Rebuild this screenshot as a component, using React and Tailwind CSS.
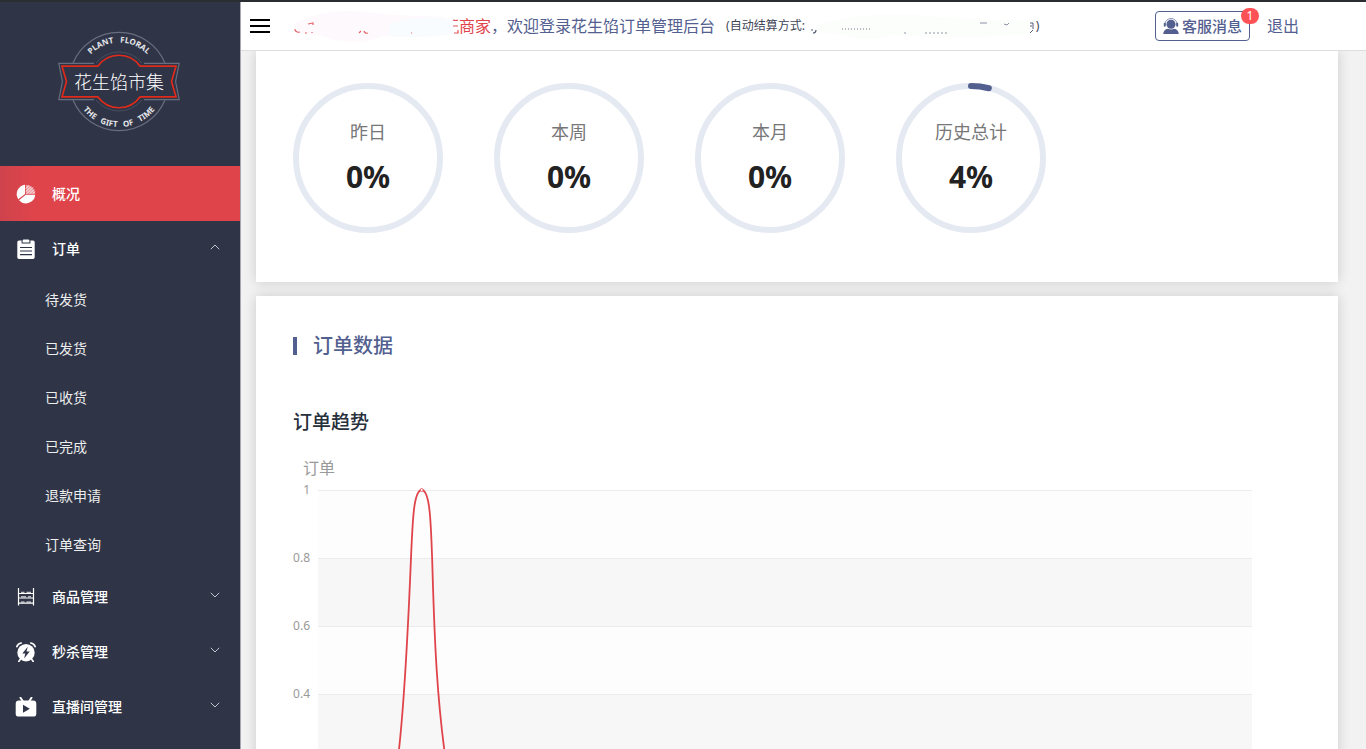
import React from "react";

const orderLinks = ["待发货", "已发货", "已收货", "已完成", "退款申请", "订单查询"];

const rates = [
  { label: "昨日", value: 0 },
  { label: "本周", value: 0 },
  { label: "本月", value: 0 },
  { label: "历史总计", value: 4 },
];

const ticks = ["1", "0.8", "0.6", "0.4"];

function Logo() {
  return (
    <svg viewBox="0 0 122 102" className="w-[122px] h-[102px]" fill="none" role="img" aria-label="花生馅市集">
      <defs>
        <path id="logo-top" d="M22 50.5a39 39 0 0 1 78 0" />
        <path id="logo-bottom" d="M15.500 50.500a45.500 45.500 0 0 0 91 0" />
      </defs>
      <path d="M15 32a49.8 49.8 0 0 1 92 0M15 69a49.8 49.8 0 0 0 92 0" stroke="#686e7e" strokeWidth="1.2" />
      <path d="M38 32a29.5 29.5 0 0 1 46 0M38 69a29.5 29.5 0 0 0 46 0" stroke="#474d60" strokeWidth="1" />
      <path d="M36 32.3H.8l3.6 18.2L.8 68.7H36M86 32.3h35.2l-3.6 18.2 3.6 18.2H86" stroke="#686e7e" strokeWidth="1.2" />
      <path
        d="M4 35.2H39.8a26 26 0 0 1 42.4 0H118l-4.5 15.3L118 65.8H82.2a26 26 0 0 1-42.4 0H4l4.5-15.3z"
        stroke="#e02a1a"
        strokeWidth="1.7"
      />
      <text fill="#e6e7ea" fontSize="8" fontWeight="700" className="font-['Noto_Sans',sans-serif]">
        <textPath href="#logo-top" startOffset="50%" textAnchor="middle">PLANT&#160;&#160; FLORAL</textPath>
      </text>
      <text fill="#e6e7ea" fontSize="8" fontWeight="700" className="font-['Noto_Sans',sans-serif]">
        <textPath href="#logo-bottom" startOffset="50%" textAnchor="middle">THE&#160;&#160; GIFT&#160;&#160; OF&#160;&#160; TIME</textPath>
      </text>
      <text x="61" y="57.5" fill="#fff" fontSize="18" fontWeight="300" textAnchor="middle">花生馅市集</text>
    </svg>
  );
}

function PieIcon() {
  return (
    <svg viewBox="0 0 20 20" className="size-5">
      <path d="M9 10V.8a9.3 9.3 0 0 0-6.7 14.5z" fill="#fff" />
      <path d="M9.8 10.8h9.4A9.3 9.3 0 0 1 3 16.2z" fill="#fff" />
      <path d="M9.8.7A9.3 9.3 0 0 1 19.2 10H9.8z" fill="#fff" fillOpacity=".45" />
      <path d="M10 4.5 12.8 1.5M10 7.5l5-5M11 9.5l6-6M14 9.5l4-4M17 9.5l1.8-1.8" stroke="#fff" strokeWidth=".9" />
    </svg>
  );
}

function ClipboardIcon() {
  return (
    <svg viewBox="0 0 20 20" className="size-5">
      <path d="M3 1.6h2.6v2.9h8.8V1.6H17a1.7 1.7 0 0 1 1.7 1.7v14.9a1.7 1.7 0 0 1-1.7 1.7H3a1.7 1.7 0 0 1-1.7-1.7V3.3A1.7 1.7 0 0 1 3 1.6z" fill="#fff" />
      <path d="M6.6 1.7q0-1.3 1.2-1.3h4.4q1.2 0 1.2 1.3v1.8H6.6z" fill="#fff" />
      <path d="M4 8.5h12M4 12h12M4 15.7h12" stroke="#2f3447" strokeWidth="1.2" />
    </svg>
  );
}

function ShelfIcon() {
  return (
    <svg viewBox="0 0 20 20" className="size-5" stroke="#fff" fill="none">
      <path d="M2.500 1v17.500M17.500 1v17.500" strokeWidth="1.2" />
      <path d="M2.500 6.500h15M2.500 11h15M2.500 16.200h15" strokeWidth="1.2" />
      <path d="M5 5.300h3.500M10.500 5.300H15M5 9.800h5M12 9.800h3M5 15h3.500M10.500 15H15" strokeWidth=".9" />
    </svg>
  );
}

function AlarmIcon() {
  return (
    <svg viewBox="0 0 20 20" className="size-5">
      <circle cx="10" cy="10.7" r="8.7" fill="#fff" />
      <path d="M.8 4.6Q2 1.6 5.3 1M19.2 4.6Q18 1.6 14.7 1M4.300 17.300l-1.500 2.200M15.700 17.300l1.500 2.200" stroke="#fff" strokeWidth="1.6" strokeLinecap="round" fill="none" />
      <path d="M11.8 4.8 6.3 11.4h3l-1.2 5.2 5.6-7h-3.2z" fill="#2f3447" />
    </svg>
  );
}

function LiveIcon() {
  return (
    <svg viewBox="0 0 22 20" className="w-[22px] h-5">
      <path d="M5.5.8 8 4.5M16.5.8 14 4.5" stroke="#fff" strokeWidth="2" strokeLinecap="round" />
      <rect x=".7" y="3.6" width="20.6" height="16" rx="3.2" fill="#fff" />
      <path d="M8 7.7v8l6.800-4z" fill="#2f3447" />
    </svg>
  );
}

function Chevron({ up }) {
  return (
    <svg viewBox="0 0 10 6" className="ml-auto mr-5 mb-1 w-[10px] h-[6px]" fill="none" stroke="#c3c5cc">
      <path d={up ? "M.8 5.2 5 1l4.2 4.2" : "M.8.8 5 5 9.2.8"} />
    </svg>
  );
}

function MenuItem({ icon, label, open }) {
  return (
    <button type="button" aria-expanded={open} className="flex h-[55px] w-full items-center text-sm font-medium text-white">
      <span className="mx-[15px] flex w-[22px] justify-center">{icon}</span>
      {label}
      <Chevron up={open} />
    </button>
  );
}

function Sidebar() {
  return (
    <nav className="w-[241px] shrink-0 border-r border-[#a5a7b2] bg-[#2f3447]">
      <div className="flex h-[164px] justify-center pt-[29px] pr-[2px]">
        <Logo />
      </div>
      <a href="#overview" className="flex h-[55px] items-center bg-[#e0444b] bg-linear-to-r from-[#cf434c] to-[#e0444b] to-15% text-sm font-medium text-white">
        <span className="mx-[15px] flex w-[22px] justify-center"><PieIcon /></span>
        概况
      </a>
      <MenuItem icon={<ClipboardIcon />} label="订单" open={true} />
      <ul className="flex h-[293px] flex-col">
        {orderLinks.map((name) => (
          <li key={name} className="flex flex-1">
            <a href="#orders" className="flex flex-1 items-center pl-[45px] text-sm text-[#eceded]">{name}</a>
          </li>
        ))}
      </ul>
      <MenuItem icon={<ShelfIcon />} label="商品管理" open={false} />
      <MenuItem icon={<AlarmIcon />} label="秒杀管理" open={false} />
      <MenuItem icon={<LiveIcon />} label="直播间管理" open={false} />
    </nav>
  );
}

function ShopSmudge() {
  return (
    <svg viewBox="0 0 166 40" className="ml-[23px] h-10 w-[166px] shrink-0" aria-hidden="true" fill="none">
      <path d="M2 17Q30 2 70 6t82 5l5 16Q130 33 90 30 60 42 30 30L2 27z" fill="#fef9fd" />
      <path d="M96 18Q130 8 160 14v14q-30 5-64 2z" fill="#f8fcff" />
      <path d="M2 23v1q1 3 5 2M12 27h2M15 18l5-1v2M19 26v1M66 27l2-2M71 25q1 3 4 2M118 27h1" stroke="#e4666b" strokeWidth="1.2" />
      <path d="M160 14q3 1 5 0M160 20h5M161 27h4v-3" stroke="#e0545a" strokeWidth="1.2" />
    </svg>
  );
}

function SettlementSmudge() {
  return (
    <svg viewBox="0 0 226 40" className="ml-[5px] h-10 w-[226px] shrink-0" aria-hidden="true" fill="none">
      <path d="M8 18Q60 5 120 10t100 4v14Q150 34 80 29 60 38 35 29L8 27z" fill="#fcfefc" />
      <path d="M1 24h2M3 27q3 0 3-3" stroke="#555d78" strokeWidth="1.2" />
      <path d="M32 23h30" stroke="#6d7388" strokeDasharray="1 2" />
      <path d="M94 27h3M115 27h24" stroke="#9096a6" strokeDasharray="2 2" />
      <path d="M170 17h7M194 18l3 1 2-2" stroke="#8a90a5" />
      <path d="M220 17h3v6M220 20h2M220 27l3-3" stroke="#555d78" />
    </svg>
  );
}

function AgentIcon() {
  return (
    <svg viewBox="0 0 16 16" className="size-4" fill="#53608f">
      <path d="M2 7V6a6 5.500 0 0 1 12 0v1" fill="none" stroke="#8a93b4" />
      <circle cx="8" cy="6.3" r="4.5" />
      <rect x=".8" y="4.8" width="2" height="4" rx="1" />
      <rect x="13.2" y="4.8" width="2" height="4" rx="1" />
      <path d="M.2 16Q.5 11.5 5 10.800q3 1.600 6 0 4.500.7 4.800 5.200z" />
    </svg>
  );
}

function Header() {
  return (
    <header className="relative z-10 flex h-[49px] shrink-0 items-center border-b border-[#dedede] bg-white pl-[9px] pr-[67px] text-base whitespace-nowrap text-[#53608f]">
      <button type="button" aria-label="菜单" className="flex w-5 shrink-0 flex-col gap-1">
        <span className="h-[2px] bg-black" />
        <span className="h-[2px] bg-black" />
        <span className="h-[2px] bg-black" />
      </button>
      <ShopSmudge />
      <p>
        <span className="text-[#e0444b]">商家</span>，欢迎登录花生馅订单管理后台
      </p>
      <p className="ml-[11px] flex items-center text-xs text-[#3f4658]">
        (自动结算方式:
        <SettlementSmudge />)
      </p>
      <button type="button" className="relative ml-auto flex h-[30px] items-center gap-[3px] rounded border border-[#53608f] px-[7px] text-[15px] font-medium">
        <AgentIcon />
        客服消息
        <span className="absolute -top-1 -right-[10px] flex h-4 w-[18px] items-center justify-center rounded-full bg-[#ff5257] text-xs font-normal text-white">1</span>
      </button>
      <a href="#logout" className="ml-[17px]">退出</a>
    </header>
  );
}

function Ring({ label, value }) {
  return (
    <div className="relative flex size-[150px] flex-col items-center">
      <svg viewBox="0 0 150 150" className="absolute inset-0 size-full -rotate-90" fill="none" strokeWidth="6">
        <circle cx="75" cy="75" r="72" stroke="#e5e9f2" />
        {value > 0 && (
          <circle cx="75" cy="75" r="72" stroke="#53608f" strokeLinecap="round" pathLength="100" strokeDasharray={`${value} 100`} />
        )}
      </svg>
      <span className="mt-[37px] text-lg leading-6 text-[#777]">{label}</span>
      <strong className="mt-[13px] text-[30px] leading-10 font-bold text-[#222]">{value}%</strong>
    </div>
  );
}

function TrendChart() {
  return (
    <figure>
      <figcaption className="ml-[10px] text-base leading-6 text-[#999]">订单</figcaption>
      <div className="mt-[10px] flex">
        <div className="w-[25px] shrink-0 pr-2 text-right text-xs text-[#999]">
          {ticks.map((tick) => (
            <div key={tick} className="flex h-[68px] items-start justify-end leading-4">
              <span className="-translate-y-1/2">{tick}</span>
            </div>
          ))}
        </div>
        <div className="relative flex-1">
          {ticks.map((tick, i) => (
            <div key={tick} className={i % 2 ? "h-[68px] border-t border-[#ececec] bg-[#f7f7f7]" : "h-[68px] border-t border-[#ececec] bg-[#fdfdfd]"} />
          ))}
          <svg className="absolute top-0 left-0 h-full w-[200px] overflow-visible" fill="none" stroke="#e0444b">
            <path
              d="M79.5 272C86 222 89.5 150 92.5 80 94.5 30 95.5 0 103.7 0S113 30 114.5 80C116.5 150 119 210 128 272"
              strokeWidth="1.8"
            />
            <circle cx="103.7" cy="0" r="1.5" fill="#fff" strokeWidth=".8" />
          </svg>
        </div>
      </div>
    </figure>
  );
}

export default function App() {
  return (
    <div className="flex h-screen overflow-hidden border-t-2 border-[#2a2e33] bg-[#f2f2f2] font-['Noto_Sans','Noto_Sans_CJK_SC',sans-serif]">
      <Sidebar />
      <div className="flex min-w-0 flex-1 flex-col">
        <Header />
        <main className="flex min-h-0 flex-1 flex-col gap-[14px] overflow-hidden pr-7 pl-[15px]">
          <section className="shrink-0 bg-white px-[37px] pt-8 pb-[49px] shadow-[0_0_12px_rgba(0,0,0,0.16)]">
            <div className="flex gap-[51px]">
              {rates.map((rate) => (
                <Ring key={rate.label} label={rate.label} value={rate.value} />
              ))}
            </div>
          </section>
          <section className="shrink-0 bg-white pt-9 pr-[86px] pl-[37px] shadow-[0_0_12px_rgba(0,0,0,0.16)]">
            <h2 className="flex items-center gap-4 text-xl leading-7 font-medium text-[#53608f]">
              <span className="h-[18px] w-1 bg-[#53608f]" />
              订单数据
            </h2>
            <h3 className="mt-12 mb-5 text-[19px] leading-7 font-medium text-[#27303b]">订单趋势</h3>
            <TrendChart />
          </section>
        </main>
      </div>
    </div>
  );
}
